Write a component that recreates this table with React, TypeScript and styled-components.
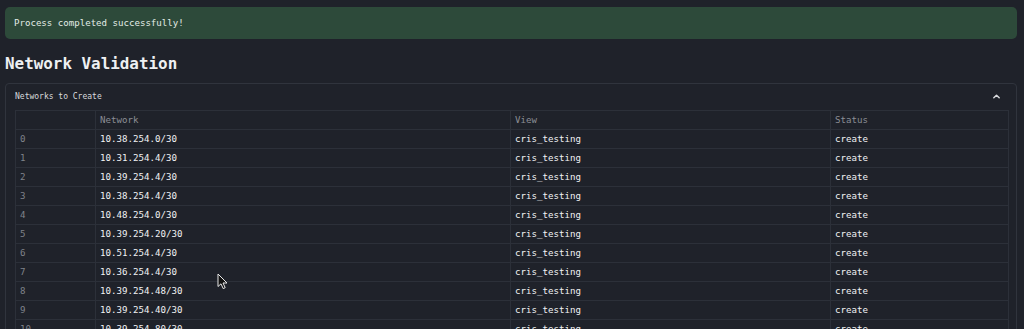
import React from "react";
import styled, { createGlobalStyle } from "styled-components";

const GlobalStyle = createGlobalStyle`
  html, body {
    margin: 0;
    padding: 0;
    background: #1f222a;
  }
  body {
    font-family: "DejaVu Sans Mono", "Liberation Mono", monospace;
    color: #e4e5e8;
  }
`;

const Page = styled.div`
  position: relative;
  padding: 7px 7px 0 5px;
`;

const SuccessBox = styled.div`
  height: 32px;
  display: flex;
  align-items: center;
  padding: 0 9px;
  background: #2d4a3a;
  border-radius: 5px;
  font-size: 9.1px;
  color: #e3ece6;
`;

const Title = styled.h1`
  margin: 16px 0 10px;
  font-size: 15.9px;
  font-weight: bold;
  line-height: 18px;
  color: #eef0f2;
`;

const Expander = styled.section`
  border: 1px solid #30343d;
  border-radius: 4px;
  padding: 0 9px;
`;

const ExpanderHeader = styled.div`
  height: 26px;
  display: flex;
  align-items: center;
  justify-content: space-between;
  padding-bottom: 1px;
  box-sizing: border-box;
  font-size: 8px;
  color: #d8dadd;
`;

const Chevron = styled.svg`
  width: 9px;
  height: 9px;
  margin-right: 6px;
`;

const Table = styled.table`
  width: 993px;
  border-collapse: collapse;
  table-layout: fixed;
  font-size: 9.15px;
`;

const Col = styled.col<{ $w: number }>`
  width: ${(p) => p.$w}px;
`;

const HeadCell = styled.th`
  height: 18px;
  padding: 0 4px;
  text-align: left;
  font-weight: normal;
  color: #8b8e95;
  border: 1px solid #2c3039;
`;

const Cell = styled.td<{ $muted?: boolean }>`
  height: 18px;
  padding: 0 4px;
  color: ${(p) => (p.$muted ? "#7f838a" : "#f1f2f4")};
  border: 1px solid #2c3039;
  white-space: nowrap;
`;

const Pointer = styled.svg`
  position: absolute;
  left: 217px;
  top: 273px;
  width: 11px;
  height: 17px;
`;

const networks = [
  "10.38.254.0/30",
  "10.31.254.4/30",
  "10.39.254.4/30",
  "10.38.254.4/30",
  "10.48.254.0/30",
  "10.39.254.20/30",
  "10.51.254.4/30",
  "10.36.254.4/30",
  "10.39.254.48/30",
  "10.39.254.40/30",
  "10.39.254.80/30",
  "10.39.254.84/30",
];

export default function App() {
  return (
    <>
      <GlobalStyle />
      <Page>
        <SuccessBox>Process completed successfully!</SuccessBox>
        <Title>Network Validation</Title>
        <Expander>
          <ExpanderHeader>
            <span>Networks to Create</span>
            <Chevron viewBox="0 0 10 10">
              <path
                d="M2 6.5 L5 3.5 L8 6.5"
                fill="none"
                stroke="#d8dadd"
                strokeWidth="1.6"
                strokeLinecap="round"
                strokeLinejoin="round"
              />
            </Chevron>
          </ExpanderHeader>
          <Table>
            <colgroup>
              <Col $w={80} />
              <Col $w={415} />
              <Col $w={320} />
              <Col $w={178} />
            </colgroup>
            <thead>
              <tr>
                <HeadCell />
                <HeadCell>Network</HeadCell>
                <HeadCell>View</HeadCell>
                <HeadCell>Status</HeadCell>
              </tr>
            </thead>
            <tbody>
              {networks.map((net, i) => (
                <tr key={net}>
                  <Cell $muted>{i}</Cell>
                  <Cell>{net}</Cell>
                  <Cell>cris_testing</Cell>
                  <Cell>create</Cell>
                </tr>
              ))}
            </tbody>
          </Table>
        </Expander>
        <Pointer viewBox="0 0 11 17">
          <path
            d="M1 1 L1 13.5 L4 10.8 L6.2 15.6 L8.2 14.7 L6 10 L10 10 Z"
            fill="#111"
            stroke="#e8e8e8"
            strokeWidth="1"
            strokeLinejoin="round"
          />
        </Pointer>
      </Page>
    </>
  );
}
